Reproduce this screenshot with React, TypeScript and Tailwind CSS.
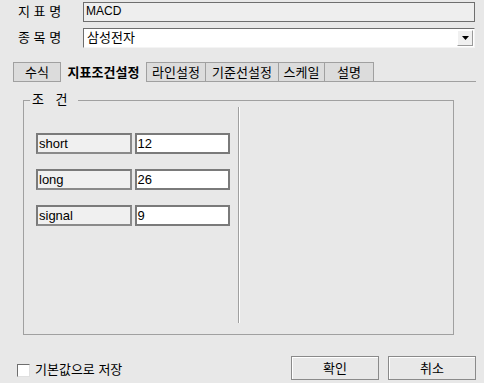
import { useState } from 'react'

const tabs = ['수식', '지표조건설정', '라인설정', '기준선설정', '스케일', '설명']

const params = [
  { name: 'short', value: '12' },
  { name: 'long', value: '26' },
  { name: 'signal', value: '9' },
]

export default function App() {
  const [active] = useState(1)
  const [saveDefault, setSaveDefault] = useState(false)

  return (
    <div className="w-[484px] h-[383px] bg-[#e8e8e8] text-[13px] leading-[15px] text-black pt-[2px] font-['Liberation_Sans','Noto_Sans_CJK_KR',sans-serif] overflow-hidden">
      {/* 지표명 */}
      <div className="flex h-[20px]">
        <div className="w-[83px] pl-[18px] pt-[2px]">지 표 명</div>
        <div className="w-[392px] border border-[#6e6e6e] bg-[#eeeeee] pl-[2px] pt-[1px] text-[12px]">MACD</div>
      </div>

      {/* 종목명 */}
      <div className="flex h-[20px] mt-[6px]">
        <div className="w-[83px] pl-[18px] pt-[2px]">종 목 명</div>
        <div className="w-[392px] flex bg-white border border-[#6e6e6e] border-b-[#f4f4f4] border-r-[#f4f4f4]">
          <div className="flex-1 pl-[3px] pt-[1px]">삼성전자</div>
          <div className="w-[16px] h-[16px] mt-[1px] mr-[1px] bg-[#f0f0f0] border border-[#9a9a9a] border-t-white border-l-white flex items-center justify-center">
            <svg width="7" height="4" viewBox="0 0 7 4">
              <path d="M0 0h7L3.5 4z" fill="#000" />
            </svg>
          </div>
        </div>
      </div>

      {/* Tabs */}
      <div className="flex h-[20px] mt-[14px] pl-[13px] pr-[8px]">
        {tabs.map((tab, i) => {
          const isActive = i === active
          const widths = ['w-[48px]', 'w-[85px]', 'w-[60px]', 'w-[73px]', 'w-[46px]', 'w-[49px]']
          return (
            <div
              key={tab}
              className={`${widths[i]} flex items-center justify-center ${
                isActive
                  ? 'font-bold'
                  : `bg-[#dcdcdc] border-y border-r border-[#a0a0a0] ${i === 0 || i === 2 ? 'border-l' : ''}`
              }`}
            >
              {tab}
            </div>
          )
        })}
        <div className="flex-1 border-b border-[#a0a0a0]" />
      </div>

      {/* 조건 group */}
      <div className="relative ml-[23px] mt-[18px] w-[431px] h-[235px] border border-[#a0a0a0] flex pl-[12px]">
        <div className="absolute left-[6px] top-[-9px] pl-[2px] pr-[6px] bg-[#e8e8e8] tracking-[4px]">조 건</div>
        <div className="w-[194px] pt-[32px] flex flex-col gap-[15px]">
          {params.map((p) => (
            <div key={p.name} className="flex gap-[3px]">
              <div className="w-[96px] h-[21px] border-2 border-[#7a7a7a] border-r-[#8a8a8a] border-b-[#8a8a8a] bg-[#f0f0f0] pl-[1px] pt-[1px]">
                {p.name}
              </div>
              <div className="w-[96px] h-[21px] border-2 border-[#7a7a7a] bg-white pl-[1px] pt-[1px]">
                {p.value}
              </div>
            </div>
          ))}
        </div>
        <div className="ml-[8px] mt-[6px] w-[2px] h-[216px] border-l border-[#a0a0a0] bg-white" />
      </div>

      {/* Bottom */}
      <div className="flex items-center h-[24px] mt-[21px] pl-[17px] pr-[8px]">
        <button
          type="button"
          onClick={() => setSaveDefault(!saveDefault)}
          className="w-[13px] h-[13px] bg-white border border-[#6e6e6e] border-b-[#e0e0e0] border-r-[#e0e0e0] mt-[4px]"
        />
        <span className="ml-[5px] mt-[2px]">기본값으로 저장</span>
        <button
          type="button"
          className="ml-auto w-[88px] h-[24px] border border-[#8a8a8a] bg-[#e8e8e8] shadow-[inset_1px_1px_0_#fff]"
        >
          확인
        </button>
        <button
          type="button"
          className="ml-[9px] w-[88px] h-[24px] border border-[#8a8a8a] bg-[#e8e8e8] shadow-[inset_1px_1px_0_#fff]"
        >
          취소
        </button>
      </div>
    </div>
  )
}
